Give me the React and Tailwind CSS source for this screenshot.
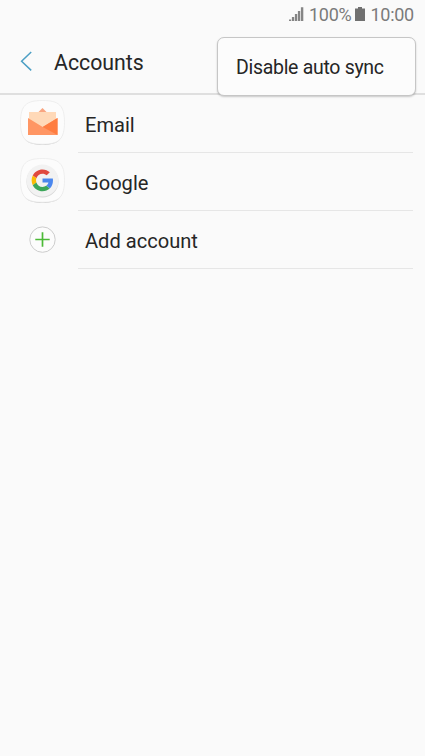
import React from 'react';

const IconTile = () => (
  <>
    <path d="M22.5 1.8C38.5 1.8 44 7 44 23.3S38.5 45 22.5 45S1 39.6 1 23.3S6.5 1.8 22.5 1.8Z" fill="#d0d0d0" />
    <path d="M22.5 .5C39 .5 44.5 5.5 44.5 22.3S39 44.2 22.5 44.2S.5 39.1 .5 22.3S6 .5 22.5 .5Z" fill="#fcfcfc" stroke="#ebebeb" strokeWidth="0.8" />
  </>
);

const EmailIcon = () => (
  <svg width="46" height="47" viewBox="0 0 46 47">
    <IconTile />
    <path d="M18.5 12L22.5 8L26.5 12Z" fill="#f9a581" />
    <path d="M9 12H36V30H9Z" fill="#ffd9b8" />
    <path d="M8 18L22.7 27L37.5 18V35H8Z" fill="#ff9664" />
    <path d="M22.7 27L37.5 18V35Z" fill="#ff7d40" />
  </svg>
);

const GoogleIcon = () => (
  <svg width="46" height="47" viewBox="0 0 46 47">
    <IconTile />
    <circle cx="22.5" cy="23.4" r="16" fill="#d8d8d8" />
    <circle cx="22.5" cy="22.5" r="16" fill="#f2f2f2" />
    <g transform="translate(11.6 11.4) scale(0.455)">
      <path fill="#E04A3F" d="M24 9.5c3.54 0 6.71 1.22 9.21 3.6l6.85-6.85C35.9 2.38 30.47 0 24 0 14.62 0 6.51 5.38 2.56 13.22l7.98 6.19C12.43 13.72 17.74 9.5 24 9.5z" />
      <path fill="#4A87EE" d="M46.98 24.55c0-1.57-.15-3.09-.38-4.55H24v9.02h12.94c-.58 2.96-2.26 5.48-4.78 7.18l7.73 6c4.51-4.18 7.09-10.36 7.09-17.65z" />
      <path fill="#FBBC05" d="M10.53 28.59c-.48-1.45-.76-2.99-.76-4.59s.27-3.14.76-4.59l-7.98-6.19C.92 16.46 0 20.12 0 24c0 3.88.92 7.54 2.56 10.78l7.97-6.19z" />
      <path fill="#3CA65A" d="M24 48c6.48 0 11.93-2.13 15.89-5.81l-7.73-6c-2.15 1.45-4.92 2.3-8.16 2.3-6.26 0-11.57-4.22-13.47-9.91l-7.98 6.19C6.51 42.62 14.62 48 24 48z" />
    </g>
  </svg>
);

const AddIcon = () => (
  <svg width="46" height="47" viewBox="0 0 46 47">
    <circle cx="22.5" cy="23.6" r="12.7" fill="#fcfcfc" stroke="#cdcdcd" />
    <path d="M15.3 23.5H29.7M22.5 16.3V30.7" stroke="#4cba37" strokeWidth="1.7" />
  </svg>
);

const accounts = [
  { label: 'Email', icon: EmailIcon },
  { label: 'Google', icon: GoogleIcon },
  { label: 'Add account', icon: AddIcon },
];

const StatusBar = () => (
  <div className="flex h-[29px] items-center justify-end pr-[11px] text-[18px] leading-[29px] text-[#7b7b7b]">
    <svg width="15" height="14" viewBox="0 0 15 14" className="mb-px mr-[5px]" fill="#858585">
      <path d="M0 12.5h2.2V14H0zM2.9 10h2.3v4H2.9zM5.9 7h2.3v7H5.9zM8.9 4h2.3v10H8.9zM11.9 .3h2.4V14h-2.4z" />
    </svg>
    <span className="mb-px w-[43px] whitespace-nowrap tracking-[-0.3px]">100%</span>
    <svg width="10" height="14" viewBox="0 0 10 14" className="mb-px ml-[3px] mr-[5px]" fill="#707070">
      <path d="M3 0h4v1.5h3V14H0V1.5h3z" />
    </svg>
    <span className="mb-px w-[44px] whitespace-nowrap pl-[0.5px] tracking-[-0.3px]">10:00</span>
  </div>
);

const App = () => {
  return (
    <div className="relative h-[756px] w-[425px] overflow-hidden bg-[#fafafa] font-[Roboto,sans-serif] text-[#262626]">
      <StatusBar />

      <header className="flex h-[66px] items-center border-b-2 border-[#dfdfdf] pl-5">
        <svg width="13" height="20" viewBox="0 0 13 20" fill="none" stroke="#4c9fc4" strokeWidth="1.5">
          <path d="M11.2 1L1.6 10.2L11.2 19.4" />
        </svg>
        <h1 className="ml-[21px] pt-1 text-[21.3px] leading-6">Accounts</h1>
      </header>

      <ul>
        {accounts.map(({ label, icon: Icon }) => (
          <li key={label} className="flex h-[58px]">
            <div className="w-[58px] pl-5 pt-[5px]">
              <Icon />
            </div>
            <div className="ml-5 mr-3 flex flex-1 items-center border-b border-[#e6e6e6] pl-[7px] pt-[3px] text-[20.1px]">
              {label}
            </div>
          </li>
        ))}
      </ul>

      {/* Overflow menu */}
      <div className="absolute left-[217px] top-[37px] flex h-[59px] w-[199px] items-center rounded-[7px] border border-[#c6c6c6] bg-[#fcfcfc] pl-[18px] pt-0.5 text-[19.5px] tracking-[-0.3px] shadow-[0_1px_2px_rgba(0,0,0,0.2)]">
        Disable auto sync
      </div>
    </div>
  );
};

export default App;
